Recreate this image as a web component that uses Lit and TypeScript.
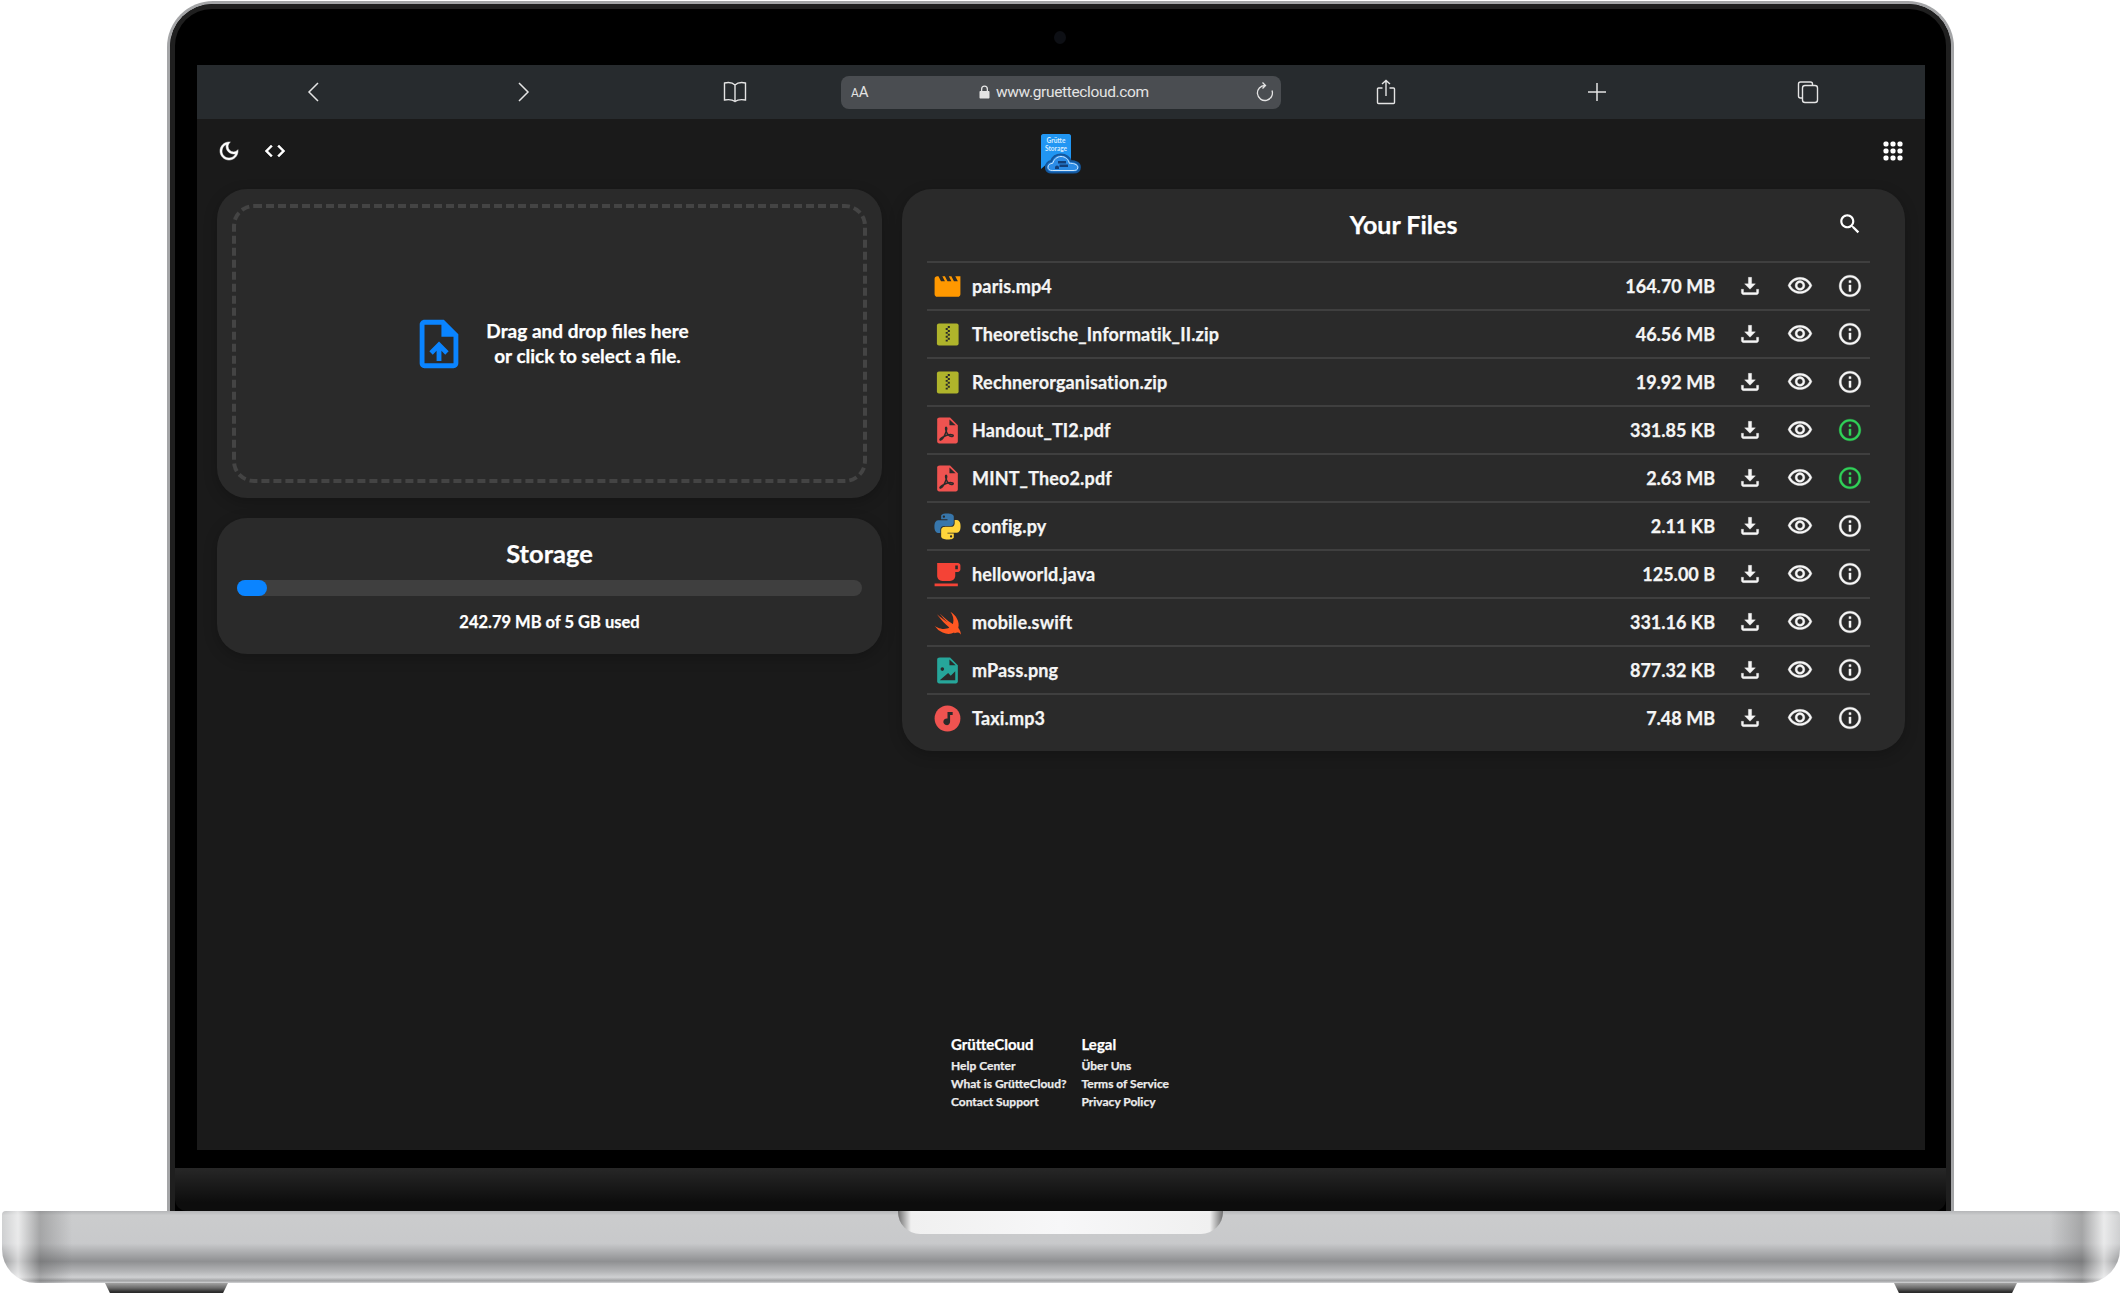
import { LitElement, css, html, svg } from 'lit'
import { customElement } from 'lit/decorators.js'

const FILE_SHAPE = 'M6 2h8l6 6v12.5c0 .8-.7 1.5-1.5 1.5h-13C4.700 22 4 21.300 4 20.500v-17C4 2.700 4.700 2 6 2z'

// file type icons, drawn on a 24 unit box
const fileIcons: Record<string, unknown> = {
   video: svg`<path fill="#ff9800" d="M18 4l2 4h-3l-2-4h-2l2 4h-3l-2-4H8l2 4H7L5 4H4c-1.100 0-1.990.9-1.990 2L2 18c0 1.100.9 2 2 2h16c1.100 0 2-.9 2-2V4h-4z"/>`,
   zip: svg`<rect x="3.800" y="3.500" width="16.800" height="17" rx="1.500" fill="#afb42b"/>
      <path fill="#2a2a2a" d="M12.200 5.500h1.600v1.500h-1.600zM10.600 7h1.600v1.500h-1.600zM12.200 8.500h1.600V10h-1.600zM10.600 10h1.600v1.500h-1.600zM12.200 11.500h1.600V13h-1.600zM10.600 13h1.600v1.500h-1.600zM12.200 14.500h1.600V16h-1.600zM10.600 16h1.600v1.500h-1.600z"/>`,
   pdf: svg`<path fill="#ef5350" d="${FILE_SHAPE}"/>
      <path fill="#2a2a2a" d="M13.500 3.500v4.500h4.800z"/>
      <path fill="none" stroke="#2a2a2a" stroke-width="1.100" d="M6.500 19.500c1.500-.6 3.600-4 4.600-7.300.5-1.700.3-2.700-.2-2.700s-.6 1.200 0 2.800c.8 2.200 2.700 4.100 4.200 4.300 1.400.2 1.800-.8.8-1.200-1.500-.5-5 .2-7.600 1.800-1.700 1-2.700 2-1.800 2.300z"/>`,
   python: svg`<g transform="translate(1.900 1.900) scale(.84)"><path fill="#3776ab" fill-rule="evenodd" d="M14.250.18l.9.2.73.26.59.3.45.32.34.34.25.34.16.33.1.3.04.26.02.2-.01.13V8.500l-.05.63-.13.55-.21.46-.26.38-.3.31-.33.25-.35.19-.35.14-.33.1-.3.07-.26.04-.21.02H8.770l-.69.05-.59.14-.5.22-.41.27-.33.32-.27.35-.2.36-.15.37-.1.35-.07.32-.04.27-.02.21v3.060H3.170l-.21-.03-.28-.07-.32-.12-.35-.18-.36-.26-.36-.36-.35-.46-.32-.59-.28-.73-.21-.88-.14-1.050-.05-1.230.06-1.220.16-1.040.24-.87.32-.71.36-.57.4-.44.42-.33.42-.24.4-.16.36-.1.32-.05.24-.01h.16l.06.01h8.160v-.83H6.180l-.01-2.750-.02-.37.05-.34.11-.31.17-.28.25-.26.31-.23.38-.2.44-.18.51-.15.58-.12.64-.1.71-.06.77-.04.84-.02 1.270.05zm-6.300 1.980l-.23.33-.08.41.08.41.23.34.33.22.41.09.41-.09.33-.22.23-.34.08-.41-.08-.41-.23-.33-.33-.22-.41-.09-.41.09z"/>
      <path fill="#ffd43b" fill-rule="evenodd" d="M21.040 6.110l.28.06.32.12.35.18.36.27.36.35.35.47.32.59.28.73.21.88.14 1.040.05 1.230-.06 1.230-.16 1.040-.24.86-.32.71-.36.57-.4.45-.42.33-.42.24-.4.16-.36.09-.32.05-.24.02-.16-.01h-8.220v.82h5.840l.01 2.760.02.36-.05.34-.11.31-.17.29-.25.25-.31.24-.38.2-.44.17-.51.15-.58.13-.64.09-.71.07-.77.04-.84.01-1.270-.04-1.070-.14-.9-.2-.73-.25-.59-.3-.45-.33-.34-.34-.25-.34-.16-.33-.1-.3-.04-.25-.02-.2.01-.13v-5.340l.05-.64.13-.54.21-.46.26-.38.3-.32.33-.24.35-.2.35-.14.33-.1.3-.06.26-.04.21-.02.13-.01h5.840l.69-.05.59-.14.5-.21.41-.28.33-.32.27-.35.2-.36.15-.36.1-.35.07-.32.04-.28.02-.21V6.070h2.090l.14.01zm-6.470 14.250l-.23.33-.08.41.08.41.23.33.33.23.41.08.41-.08.33-.23.23-.33.08-.41-.08-.41-.23-.33-.33-.23-.41-.08-.41.08z"/></g>`,
   java: svg`<path fill="#f44336" d="M20 3H4v10c0 2.210 1.790 4 4 4h6c2.210 0 4-1.790 4-4v-3h2c1.110 0 2-.9 2-2V5c0-1.110-.89-2-2-2zm0 5h-2V5h2v3zM2 21h18v-2H2v2z"/>`,
   swift: svg`<path fill="#ff5722" d="M17.090 19.720c-2.360 1.360-5.590 1.500-8.860.1A13.807 13.807 0 0 1 2 14.500c.67.56 1.460 1 2.300 1.400 3.370 1.570 6.730 1.460 9.100 0-3.370-2.590-6.240-5.960-8.370-8.710-.45-.45-.78-1.010-1.120-1.510 2.600 2.370 6.700 5.370 8.170 6.200C9 9.280 6.170 5.100 6.270 5.220c4.890 4.940 9.430 7.740 9.430 7.740.16.09.28.16.39.22.1-.25.19-.51.26-.78.79-2.850-.11-6.120-2.080-8.810 4.550 2.750 7.250 7.910 6.120 12.240-.03.11-.06.22-.09.33 2.250 2.810 2.240 5.790 1.950 5.220-1.220-2.390-3.480-1.660-4.670-1.110z"/>`,
   image: svg`<path fill="#26a69a" fill-rule="evenodd" d="${FILE_SHAPE}M13.500 3.500V8h4.800zM8 9.500a1.400 1.400 0 1 0 0 2.800 1.400 1.400 0 0 0 0-2.800zM6 19.500h12v-7l-3.500 3.500-2-2z"/>`,
   audio: svg`<circle cx="12" cy="12" r="10" fill="#ef5350"/><path fill="#2a2a2a" d="M12 7h4v2.200h-2v5.300a2.600 2.600 0 1 1-2-2.500z"/>`,
}

const files = [
   { name: 'paris.mp4', size: '164.70 MB', kind: 'video', shared: false },
   { name: 'Theoretische_Informatik_II.zip', size: '46.56 MB', kind: 'zip', shared: false },
   { name: 'Rechnerorganisation.zip', size: '19.92 MB', kind: 'zip', shared: false },
   { name: 'Handout_TI2.pdf', size: '331.85 KB', kind: 'pdf', shared: true },
   { name: 'MINT_Theo2.pdf', size: '2.63 MB', kind: 'pdf', shared: true },
   { name: 'config.py', size: '2.11 KB', kind: 'python', shared: false },
   { name: 'helloworld.java', size: '125.00 B', kind: 'java', shared: false },
   { name: 'mobile.swift', size: '331.16 KB', kind: 'swift', shared: false },
   { name: 'mPass.png', size: '877.32 KB', kind: 'image', shared: false },
   { name: 'Taxi.mp3', size: '7.48 MB', kind: 'audio', shared: false },
]

const footerColumns = [
   { title: 'GrütteCloud', links: ['Help Center', 'What is GrütteCloud?', 'Contact Support'] },
   { title: 'Legal', links: ['Über Uns', 'Terms of Service', 'Privacy Policy'] },
]

@customElement('app-root')
export class AppRoot extends LitElement {
   static styles = css`
      :host {
         display: block;
         width: 2122px;
         height: 1297px;
         overflow: hidden;
         background: #fff;
         font-family: 'Lato', 'Noto Sans', sans-serif;
         font-weight: 700;
         color: #fff;
         -webkit-text-stroke: .25px currentColor;
      }

      svg { display: block; flex: none; }

      /* laptop frame */
      .lid {
         box-sizing: border-box;
         width: 1787px;
         height: 1210px;
         margin: 1px 0 0 167px;
         border: 3px solid #a4a5a7;
         border-bottom: 0;
         border-radius: 46px 46px 0 0;
         background: #000;
         overflow: hidden;
      }
      .bezel {
         box-sizing: border-box;
         height: 100%;
         border: 5px solid #1f1f1f;
         border-bottom: 0;
         border-radius: 42px 42px 0 0;
         background: #000;
         padding: 56px 0 0 22px;
         display: flex;
         flex-direction: column;
      }
      .camera {
         position: absolute;
         left: 1054px;
         top: 31px;
         width: 12px;
         height: 13px;
         border-radius: 50%;
         background: #0d0f14;
      }
      .chin {
         margin: 18px 0 0 -22px;
         height: 43px;
         background: linear-gradient(#272727, #0d0d0d 80%);
         border-radius: 0 0 12px 12px;
      }
      .base {
         position: relative;
         box-sizing: border-box;
         width: 2118px;
         height: 72px;
         margin-left: 2px;
         border-radius: 4px 4px 34px 34px;
         background:
            linear-gradient(90deg, rgba(255,255,255,.1) 0, rgba(255,255,255,.6) 16px, rgba(80,80,80,.3) 38px, transparent 70px, transparent calc(100% - 70px), rgba(80,80,80,.3) calc(100% - 38px), rgba(255,255,255,.6) calc(100% - 16px), rgba(255,255,255,.1) 100%),
            linear-gradient(#b5b6b8 0, #cbcccd 6%, #c8c9cb 45%, #8f9092 70%, #b4b5b7 84%, #cfd0d2 92%, #a0a1a3 97%, #d4d5d7 100%);
      }
      .notch {
         position: absolute;
         left: 896px;
         top: 0;
         width: 325px;
         height: 23px;
         border-radius: 0 0 22px 22px;
         background: linear-gradient(90deg, #6e6e6e 0, #f0f0f0 4%, #f7f7f8 50%, #f0f0f0 96%, #6e6e6e 100%);
      }
      .feet {
         display: flex;
         justify-content: space-between;
         padding: 0 105px;
      }
      .foot {
         width: 123px;
         height: 10px;
         clip-path: polygon(0 0, 100% 0, 96% 100%, 4% 100%);
         background: linear-gradient(#a2a2a2, #6a6a6a 50%, #2a2a2a 90%);
      }

      /* screen */
      .screen {
         width: 1728px;
         height: 1085px;
         flex: none;
         background: #1a1a1a;
         overflow: hidden;
      }

      .toolbar {
         display: flex;
         align-items: center;
         height: 54px;
         padding-left: 10px;
         background: #272b2e;
         color: #e4e4e4;
         -webkit-text-stroke: 0;
      }
      .tool { width: 211px; display: flex; justify-content: center; }
      .url {
         box-sizing: border-box;
         width: 440px;
         height: 33px;
         margin-left: 1px;
         margin-right: -1px;
         padding: 0 6px 0 10px;
         display: flex;
         align-items: center;
         border-radius: 8px;
         background: #4a4d51;
         font: 400 15.500px 'Roboto', sans-serif;
      }
      .url .aa { font-size: 15px; width: 128px; letter-spacing: -.2px; }
      .url .aa small { font-size: 12px; }
      .url .host { display: flex; align-items: center; gap: 6px; flex: 1; }
      .url .host span { letter-spacing: -.35px; }

      .page-body {
         display: flex;
         flex-direction: column;
         height: 1031px;
      }
      .topbar {
         display: grid;
         grid-template-columns: 1fr auto 1fr;
         align-items: center;
         box-sizing: border-box;
         height: 70px;
         padding: 0 20px 6px;
      }
      .topbar-left { display: flex; gap: 22px; }
      .topbar-left svg { stroke: currentColor; stroke-width: .5px; }
      .topbar-right { justify-self: end; }
      .logo { margin-top: 6px; -webkit-text-stroke: 0; }

      .columns {
         display: grid;
         grid-template-columns: 665px 1003px;
         gap: 20px;
         padding: 0 20px;
         align-items: start;
      }
      .left { display: flex; flex-direction: column; gap: 20px; }

      .card {
         background: #2a2a2a;
         border-radius: 30px;
         box-shadow: 0 4px 14px rgba(0, 0, 0, .22);
      }

      .upload { padding: 15px; }
      .dropzone {
         box-sizing: border-box;
         height: 279px;
         border: 4px dashed #444;
         border-radius: 22px;
         display: flex;
         align-items: center;
         justify-content: center;
         gap: 18px;
      }
      .dropzone p {
         margin: 0;
         font-size: 19px;
         line-height: 24.500px;
         text-align: center;
      }

      .storage { padding: 19px 20px 20px; text-align: center; }
      .storage h2 {
         margin: 0 0 11px;
         font-size: 25.500px;
         line-height: 32px;
         font-weight: 700;
      }
      .track {
         height: 16px;
         border-radius: 8px;
         background: #3f3f3f;
      }
      .fill {
         height: 100%;
         border-radius: 8px;
         background: #0a84ff;
      }
      .storage p {
         margin: 14px 0 0;
         font-size: 16.500px;
         line-height: 24px;
      }

      .files { padding: 0 35px 10px 25px; }
      .files-head {
         display: grid;
         grid-template-columns: 1fr auto 1fr;
         align-items: center;
         height: 72px;
      }
      .files-head h2 {
         grid-column: 2;
         margin: 0 0 3px 10px;
         font-size: 25px;
         font-weight: 700;
      }
      .files-head .search { justify-self: end; margin-right: 7px; margin-bottom: 2px; }

      .row {
         box-sizing: border-box;
         display: flex;
         align-items: center;
         height: 48px;
         border-top: 2px solid #3f3f3f;
      }
      .file-icon { width: 40px; display: flex; justify-content: center; margin-right: 5px; }
      .name { flex: 1; font-size: 18px; letter-spacing: .15px; color: #f5f5f5; }
      .size { font-size: 18px; color: #f5f5f5; margin-right: 22px; }
      .actions { display: flex; gap: 24px; padding-right: 7px; color: #f5f5f5; }
      .actions svg { stroke: currentColor; stroke-width: .3px; }
      .actions .shared { color: #30d158; }

      footer {
         margin-top: auto;
         padding: 0 2px 39px 0;
         display: flex;
         justify-content: center;
         gap: 15px;
      }
      footer h4 {
         margin: 0 0 3px;
         font-size: 15px;
         line-height: 19px;
         font-weight: 700;
      }
      footer a {
         display: block;
         font-size: 12px;
         line-height: 18px;
         color: #ececec;
      }
   `

   private icon(d: string, size = 26, cls = '') {
      return html`<svg class=${cls} width=${size} height=${size} viewBox="0 0 24 24" fill="currentColor"><path d=${d}></path></svg>`
   }

   private renderToolbar() {
      return html`
         <div class="toolbar">
            <div class="tool">
               <svg width="14" height="20" viewBox="0 0 14 20" fill="none" stroke="currentColor" stroke-width="1.500"><path d="M12 1 3 10l9 9"></path></svg>
            </div>
            <div class="tool">
               <svg width="14" height="20" viewBox="0 0 14 20" fill="none" stroke="currentColor" stroke-width="1.500"><path d="m2 1 9 9-9 9"></path></svg>
            </div>
            <div class="tool">
               <svg width="26" height="22" viewBox="0 0 26 22" fill="none" stroke="currentColor" stroke-width="1.400"><path d="M13 4C11 2 7 1 2.500 2v17c4-.7 8-.4 10.500 1.500 2.500-1.900 6.500-2.200 10.500-1.500V2C19 1 15 2 13 4zm0 0v16"></path></svg>
            </div>
            <div class="url">
               <span class="aa"><small>A</small>A</span>
               <span class="host">
                  <svg width="11" height="14" viewBox="0 0 11 14" fill="currentColor"><path d="M2 6V4a3.500 3.500 0 0 1 7 0v2h.5c.6 0 1 .4 1 1v5.500c0 .6-.4 1-1 1h-8c-.6 0-1-.4-1-1V7c0-.6.4-1 1-1zm1.300 0h4.400V4a2.200 2.200 0 0 0-4.400 0z"></path></svg>
                  <span>www.gruettecloud.com</span>
               </span>
               <svg width="20" height="22" viewBox="0 0 20 22" fill="none" stroke="currentColor" stroke-width="1.300"><path d="M10 4.500a7.500 7.500 0 1 0 7 5M7.500 1.500l3 3-3 3"></path></svg>
            </div>
            <div class="tool">
               <svg width="22" height="26" viewBox="0 0 22 26" fill="none" stroke="currentColor" stroke-width="1.400"><path d="M11 17V1.500M7 5l4-3.500L15 5M7.500 9H3.500c-.6 0-1 .4-1 1v13.500c0 .6.4 1 1 1h15c.6 0 1-.4 1-1V10c0-.6-.4-1-1-1h-4"></path></svg>
            </div>
            <div class="tool">
               <svg width="20" height="20" viewBox="0 0 20 20" fill="none" stroke="currentColor" stroke-width="1.500"><path d="M10 1v18M1 10h18"></path></svg>
            </div>
            <div class="tool">
               <svg width="24" height="24" viewBox="0 0 24 24" fill="none" stroke="currentColor" stroke-width="1.400"><path d="M6 18H4.500c-1.200 0-2-.8-2-2V4c0-1.200.8-2 2-2h10c1.200 0 2 .8 2 2v1"></path><rect x="6.500" y="5.500" width="15" height="17" rx="2.500"></rect></svg>
            </div>
         </div>
      `
   }

   private renderLogo() {
      return html`
         <svg class="logo" width="40" height="40" viewBox="0 0 40 40">
            <path fill="#2196f3" d="M2 0h26c1 0 2 1 2 2v26H8l-8 7V2C0 1 1 0 2 0z"></path>
            <text x="15" y="9" text-anchor="middle" font-size="6.500" font-family="Lato, sans-serif" fill="#d6ecff">Grütte</text>
            <text x="15" y="17" text-anchor="middle" font-size="6.500" font-family="Lato, sans-serif" fill="#d6ecff">Storage</text>
            <path fill="#2b8be6" stroke="#14589f" stroke-width="2.200" d="M11 38.500c-3.800 0-6-2.200-6-5.300S7 27.500 10.200 27.200C11.500 23.500 15 20.500 20 20.500c5 0 8.800 3.200 9.800 6.700 4.700 0 9 2.200 9 6s-3.200 5.300-6.500 5.300z"></path>
            <path fill="none" stroke="#cfe6fb" stroke-width="1" d="M11.200 36.500c-2.500 0-4.200-1.300-4.200-3.300s2-3.800 4.700-3.900c1-3.500 4.200-6.800 8.300-6.800 4.400 0 7.600 3.200 8.300 6.800 3.700-.2 8.500 1 8.500 3.900s-2.200 3.300-4.800 3.300z"></path>
            <path fill="#123f7a" d="M17 27h8v2.500h-8zM18.500 30.500H27V33h-8.500zM14 33.500a2 2 0 0 1 4 0V35h-4z"></path>
         </svg>
      `
   }

   private renderFile(f: (typeof files)[number]) {
      return html`
         <div class="row">
            <span class="file-icon"><svg width="31" height="31" viewBox="0 0 24 24">${fileIcons[f.kind]}</svg></span>
            <span class="name">${f.name}</span>
            <span class="size">${f.size}</span>
            <span class="actions">
               ${this.icon('M18 15v3H6v-3H4v3c0 1.100.9 2 2 2h12c1.100 0 2-.9 2-2v-3h-2zM10.500 4h3v6h3.500L12 15l-5-5h3.500z', 26)}
               ${this.icon('M12 6c3.790 0 7.170 2.130 8.820 5.500C19.170 14.870 15.790 17 12 17s-7.170-2.130-8.820-5.500C4.830 8.130 8.210 6 12 6m0-2C7 4 2.730 7.110 1 11.500 2.730 15.890 7 19 12 19s9.270-3.110 11-7.500C21.270 7.110 17 4 12 4zm0 5c1.380 0 2.500 1.120 2.500 2.500S13.380 14 12 14s-2.500-1.120-2.500-2.500S10.620 9 12 9m0-2c-2.480 0-4.500 2.020-4.500 4.500S9.520 16 12 16s4.500-2.020 4.500-4.500S14.480 7 12 7z', 26)}
               ${this.icon('M11 7h2v2h-2zm0 4h2v6h-2zm1-9C6.480 2 2 6.480 2 12s4.480 10 10 10 10-4.480 10-10S17.520 2 12 2zm0 18c-4.410 0-8-3.590-8-8s3.590-8 8-8 8 3.590 8 8-3.590 8-8 8z', 26, f.shared ? 'shared' : '')}
            </span>
         </div>
      `
   }

   render() {
      return html`
         <div class="lid">
            <div class="bezel">
               <div class="camera"></div>
               <div class="screen">
                  ${this.renderToolbar()}
                  <div class="page-body">
                     <div class="topbar">
                        <div class="topbar-left">
                           ${this.icon('M9.370 5.510c-.18.64-.27 1.310-.27 1.990 0 4.080 3.320 7.400 7.400 7.400.68 0 1.350-.09 1.990-.27C17.450 17.190 14.930 19 12 19c-3.860 0-7-3.140-7-7 0-2.930 1.810-5.450 4.370-6.490zM12 3c-4.970 0-9 4.030-9 9s4.030 9 9 9 9-4.030 9-9c0-.46-.04-.92-.1-1.360-.98 1.370-2.580 2.260-4.400 2.260-2.980 0-5.400-2.420-5.400-5.400 0-1.810.89-3.420 2.260-4.400-.44-.06-.9-.1-1.360-.1z', 24)}
                           ${this.icon('M9.400 16.600 4.800 12l4.600-4.600L8 6l-6 6 6 6 1.400-1.400zm5.200 0 4.600-4.600-4.600-4.600L16 6l6 6-6 6-1.400-1.400z', 24)}
                        </div>
                        ${this.renderLogo()}
                        <div class="topbar-right">
                           <svg width="24" height="24" viewBox="0 0 24 24" fill="#fff">
                              ${[5, 12, 19].flatMap((y) => [5, 12, 19].map((x) => svg`<rect x=${x - 2.5} y=${y - 2.5} width="5" height="5" rx="1.800"></rect>`))}
                           </svg>
                        </div>
                     </div>

                     <div class="columns">
                        <div class="left">
                           <section class="card upload">
                              <div class="dropzone">
                                 <svg width="58" height="58" viewBox="0 0 24 24" fill="#0a84ff"><path d="M14 2H6c-1.100 0-1.990.9-1.990 2L4 20c0 1.100.89 2 1.990 2H18c1.100 0 2-.9 2-2V8l-6-6zm4 18H6V4h7v5h5v11zM8 15.010l1.410 1.410L11 14.840V19h2v-4.160l1.590 1.590L16 15.010 12.010 11z"></path></svg>
                                 <p>Drag and drop files here<br />or click to select a file.</p>
                              </div>
                           </section>
                           <section class="card storage">
                              <h2>Storage</h2>
                              <div class="track"><div class="fill" style="width: ${(30 / 625) * 100}%"></div></div>
                              <p>242.79 MB of 5 GB used</p>
                           </section>
                        </div>

                        <section class="card files">
                           <div class="files-head">
                              <h2>Your Files</h2>
                              ${this.icon('M15.500 14h-.79l-.28-.27C15.410 12.590 16 11.110 16 9.500 16 5.910 13.090 3 9.500 3S3 5.910 3 9.500 5.910 16 9.500 16c1.610 0 3.090-.59 4.230-1.570l.27.28v.79l5 4.990L20.490 19l-4.990-5zm-6 0C7.010 14 5 11.990 5 9.500S7.010 5 9.500 5 14 7.010 14 9.500 11.990 14 9.500 14z', 26, 'search')}
                           </div>
                           ${files.map((f) => this.renderFile(f))}
                        </section>
                     </div>

                     <footer>
                        ${footerColumns.map((col) => html`
                           <div>
                              <h4>${col.title}</h4>
                              ${col.links.map((l) => html`<a>${l}</a>`)}
                           </div>
                        `)}
                     </footer>
                  </div>
               </div>
               <div class="chin"></div>
            </div>
         </div>
         <div class="base"><div class="notch"></div></div>
         <div class="feet"><div class="foot"></div><div class="foot"></div></div>
      `
   }
}
